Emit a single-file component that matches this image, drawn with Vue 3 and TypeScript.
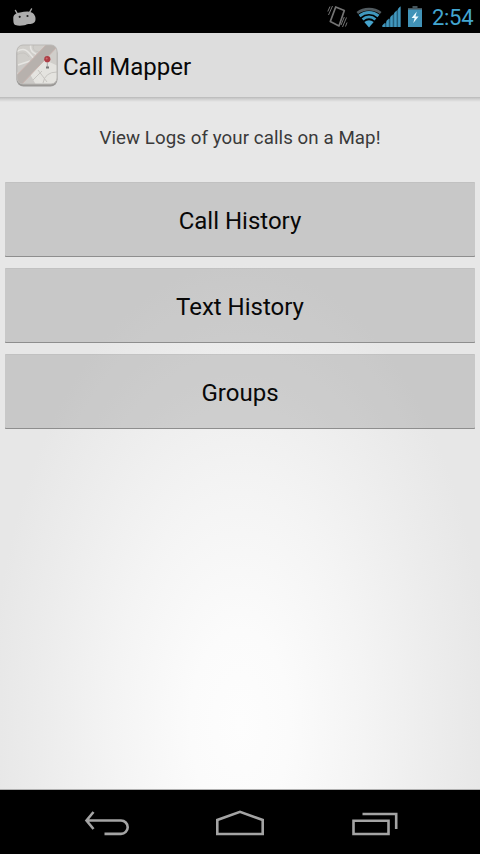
<script setup lang="ts">
const actions: string[] = ['Call History', 'Text History', 'Groups']
const signalBars: number[] = [0, 1, 2, 3, 4]
</script>

<template>
  <div class="screen">
    <header class="status">
      <svg class="droid" width="26" height="20" viewBox="0 0 26 20">
        <path d="M4.500 3.500 6.500 7M20.500 2 18.500 5.500" stroke="#a8a8a8" stroke-width="1.500" stroke-linecap="round" />
        <path d="M2.300 12C2 8 4.500 6 9 5.500c4-.6 8-1.500 11-.3 3.500 1.200 5.300 5 4.300 8.500-1 3-4 3.300-7 3.300-1.600.1-2 1-4 1.300-3 .5-6.500.6-9-.2-1.800-.9-2-3.500-2-6.100Z" fill="#adadad" />
        <circle cx="8.700" cy="9.800" r="1.100" fill="#222" />
        <circle cx="16.500" cy="9" r="1.100" fill="#222" />
      </svg>
      <div class="indicators">
        <svg class="vibrate" width="22" height="26" viewBox="0 0 22 26" fill="none" stroke="#747474">
          <path d="M8.700 3 17.300 6.500 12 22 3.300 17.500Z" stroke-width="1.700" stroke-linejoin="round" />
          <path d="M5.500 2 1.500 11M3 2.500 .8 7.500M19.500 13.500 15.500 23M17.300 13 14 21M20 18.500l-1.500 4" stroke-width="1" />
        </svg>
        <svg class="wifi" width="26" height="22" viewBox="0 0 26 22" fill="none">
          <path d="M1.300 7C8 1.800 18 1.800 24.700 7" stroke="#515b60" stroke-width="2.600" />
          <path d="M3.500 10C9 5.300 17 5.300 22.500 10" stroke="#4198be" stroke-width="3" />
          <path d="M6.600 13.500c3.700-3.400 9.100-3.400 12.800 0" stroke="#3d97bd" stroke-width="2.700" />
          <path d="M8.300 16q4.700-3.500 9.400 0L13 21.500Z" fill="#46a4cd" />
        </svg>
        <svg class="signal" width="19" height="21" viewBox="0 0 19 21">
          <path d="M0 21 18.500 .5V21Z" fill="#245f7b" />
          <path
            v-for="n in signalBars"
            :key="n"
            :d="`M${.5 + n * 3.9} 21v-${1.800 + n * 4.1}l2.400-2.500V21Z`"
            fill="#4298bf"
          />
        </svg>
        <svg class="battery" width="14" height="21" viewBox="0 0 14 21">
          <path d="M4.500 0h5v2H14v2H0V2h4.500Z" fill="#46555c" />
          <path d="M0 3.500h14V21H0Z" fill="#4193b8" />
          <path d="M8.800 5.500 3.600 12h3L5.300 17l5.300-6.500H7.500Z" fill="#eefaff" />
        </svg>
        <span class="clock">2:54</span>
      </div>
    </header>

    <main class="body">
      <div class="title-bar">
        <svg class="app-icon" width="42" height="43" viewBox="0 0 42 43">
          <defs>
            <clipPath id="tile"><rect x="1" y="1" width="40" height="39" rx="6" /></clipPath>
          </defs>
          <rect x=".5" y="2" width="41" height="40.500" rx="7" fill="#9a9896" />
          <g clip-path="url(#tile)">
            <rect width="42" height="41" fill="#d0ceca" />
            <path d="M0 21 17 18 24 41H0Z" fill="#cbc9c6" />
            <path d="M14 30 29 16 42 22V41H20Z" fill="#e4e3df" />
            <g fill="none" stroke="#e6e5e2" stroke-width="1.500">
              <path d="M0 8q8-6 14 2t9 5M2 21 14 17M15 0q-2 7 5 10M0 28l9 8M17 27 27 41M22 26l12-9" />
            </g>
            <g fill="none" stroke="#c6c4c0" stroke-width="1">
              <path d="M0 11q9-5 13 2M18 0q-3 7 5 8M17 36l9-9M27 39q2-11 14-11M22 26l9 12" />
            </g>
            <path d="M-1 33 32-1h9v4L5 41H-1Z" fill="#b7b1ad" />
            <path d="M-1 33 32-1M5 41 41 3" stroke="#c9b3ae" stroke-width="1" />
            <path d="M31.300 17v6" stroke="#aaa" stroke-width="1" />
            <path d="M30 23.500h3" stroke="#777" stroke-width="2" />
            <circle cx="31.300" cy="15.200" r="3.100" fill="#ae3d45" />
            <circle cx="30.700" cy="14.500" r="1" fill="#cb6b6e" />
          </g>
          <rect x="1" y="1" width="40" height="39" rx="6" fill="none" stroke="#bbb9b6" />
        </svg>
        <h1 class="title">Call Mapper</h1>
      </div>
      <div class="bar-shadow"></div>
      <p class="message">View Logs of your calls on a Map!</p>
      <div class="actions">
        <button v-for="label in actions" :key="label" class="action" type="button">{{ label }}</button>
      </div>
    </main>

    <nav class="nav">
      <svg width="46" height="28" viewBox="0 0 46 28" fill="none" stroke="#a4a4a4" stroke-width="2.600">
        <path d="M9.500 2 2.500 10.500 9.500 19M2.500 10.500h34.500a6.700 6.700 0 0 1 0 13.400H20.500" />
      </svg>
      <svg width="50" height="28" viewBox="0 0 50 28" fill="none" stroke="#a4a4a4" stroke-width="2.600">
        <path d="M1.300 24V10L24 1.800 46.700 10v14Z" />
      </svg>
      <svg width="46" height="28" viewBox="0 0 46 28" fill="none" stroke="#a4a4a4" stroke-width="2.600">
        <path d="M1.500 10.800h35V24h-35ZM10.500 4h33.700v15" />
      </svg>
    </nav>
  </div>
</template>

<style>
body {
  margin: 0;
  background: #000;
}
</style>

<style scoped>
.screen {
  width: 480px;
  height: 854px;
  display: flex;
  flex-direction: column;
  overflow: hidden;
  background: #000;
  font-family: Roboto, sans-serif;
}
.status {
  height: 33px;
  box-sizing: border-box;
  padding: 0 7px 0 11px;
  display: flex;
  align-items: center;
  justify-content: space-between;
}
.indicators {
  display: flex;
  align-items: center;
}
.wifi {
  margin-left: 7px;
}
.battery {
  margin-left: 7px;
}
.clock {
  width: 41px;
  margin-left: 10px;
  padding-top: 2px;
  color: #43a6d1;
  font-size: 22px;
  line-height: 31px;
  letter-spacing: -0.3px;
  white-space: nowrap;
}
.body {
  height: 757px;
  box-sizing: border-box;
  display: flex;
  flex-direction: column;
  border-bottom: 1px solid #b0b0b0;
  background: radial-gradient(ellipse 250px 460px at 240px 690px, #fdfdfd 0%, #fbfbfb 20%, #f4f4f4 50%, #ececec 80%, #e7e7e7 100%);
}
.title-bar {
  height: 64px;
  box-sizing: border-box;
  flex: none;
  padding-left: 16px;
  display: flex;
  align-items: center;
  gap: 5px;
  background: #dddddd;
}
.title {
  margin: 0;
  padding-top: 3px;
  color: #080808;
  font-size: 24px;
  font-weight: 400;
  line-height: 32px;
  letter-spacing: 0;
}
.bar-shadow {
  height: 5px;
  flex: none;
  background: linear-gradient(#b8b8b8, #cfcfcf 40%, #e7e7e7);
}
.message {
  margin: 24px 0 32px;
  color: #3a3a3a;
  font-size: 18.7px;
  line-height: 24px;
  letter-spacing: 0.08px;
  text-align: center;
}
.actions {
  padding: 0 5px;
  display: flex;
  flex-direction: column;
  gap: 11px;
}
.action {
  height: 75px;
  box-sizing: border-box;
  border: 0;
  border-radius: 1px;
  padding: 2px 0 0;
  background: rgba(146, 146, 146, 0.36);
  box-shadow: inset 0 -1px 0 #8e8e8e, inset 0 1px 0 rgba(180, 180, 180, 0.3);
  color: #080808;
  font: 400 24px/32px Roboto, sans-serif;
}
.nav {
  height: 64px;
  box-sizing: border-box;
  padding: 3px 82px 0 84px;
  display: flex;
  align-items: center;
  justify-content: space-between;
}
</style>
